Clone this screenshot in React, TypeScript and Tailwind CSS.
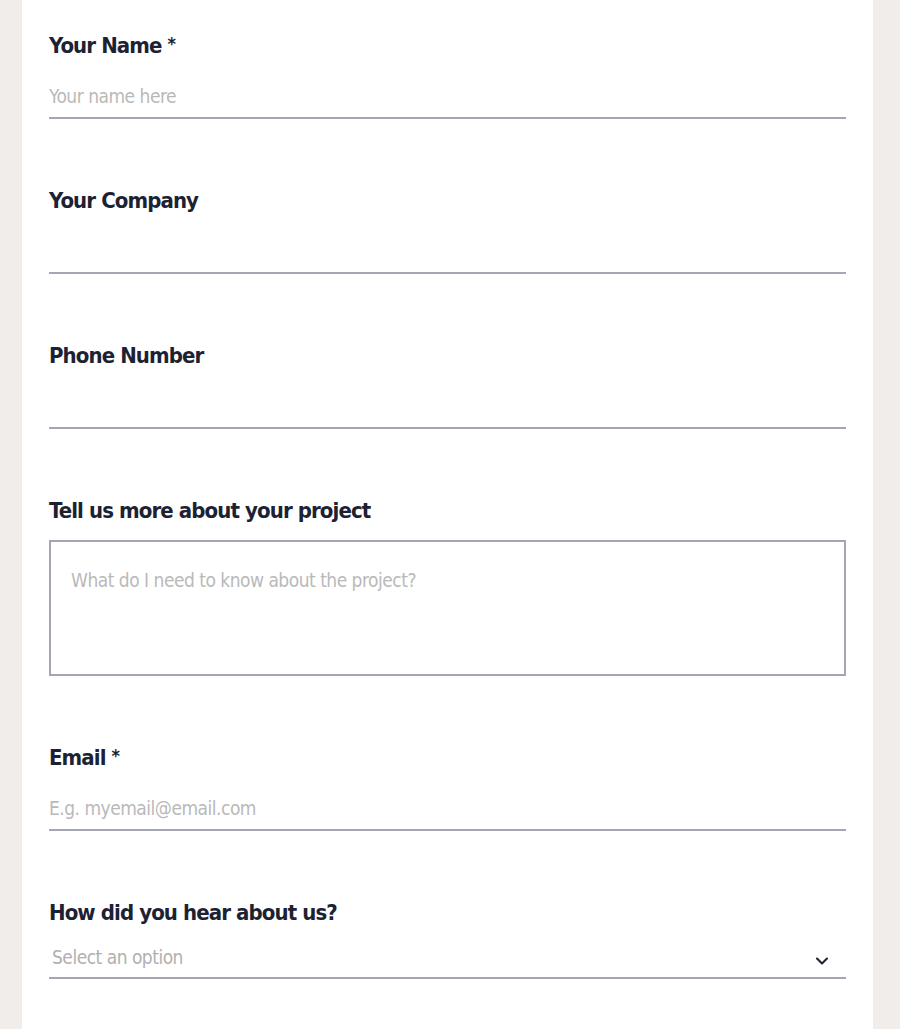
import { ChevronDown } from "lucide-react";

const labelFont = { fontFamily: '"Liberation Sans Narrow", "DejaVu Sans Condensed", "Liberation Sans", sans-serif' };

function Label({ text, required }: { text: string; required?: boolean }) {
  return (
    <label
      style={labelFont}
      className="block h-[32px] text-[22px] leading-[32px] font-bold tracking-[-0.9px] text-[#1d2233]"
    >
      {text}
      {required && <span className="ml-[6px] text-[18px] align-top leading-[28px]">*</span>}
    </label>
  );
}

function LineInput({ placeholder }: { placeholder?: string }) {
  return (
    <input
      type="text"
      placeholder={placeholder}
      style={labelFont}
      className="mt-[13px] block h-[44px] w-full border-b-2 border-[#a3a6b4] bg-transparent text-[19px] tracking-[-0.5px] text-[#1d2233] outline-none placeholder:text-[#b9b9b9]"
    />
  );
}

export default function App() {
  return (
    <div className="flex h-[1029px] w-full bg-[#f1edea]">
      <div className="ml-[22px] w-[851px] bg-white px-[27px] pt-[30px]">
        {/* Name */}
        <div>
          <Label text="Your Name" required />
          <LineInput placeholder="Your name here" />
        </div>

        {/* Company */}
        <div className="mt-[66px]">
          <Label text="Your Company" />
          <LineInput />
        </div>

        {/* Phone */}
        <div className="mt-[66px]">
          <Label text="Phone Number" />
          <LineInput />
        </div>

        {/* Project */}
        <div className="mt-[66px]">
          <Label text="Tell us more about your project" />
          <textarea
            placeholder="What do I need to know about the project?"
            style={labelFont}
            className="mt-[13px] block h-[136px] w-full resize-none border-2 border-[#a3a6b4] px-[20px] py-[24px] text-[19px] leading-[28px] tracking-[-0.5px] text-[#1d2233] outline-none placeholder:text-[#b9b9b9]"
          />
        </div>

        {/* Email */}
        <div className="mt-[66px]">
          <Label text="Email" required />
          <LineInput placeholder="E.g. myemail@email.com" />
        </div>

        {/* Source */}
        <div className="mt-[66px]">
          <Label text="How did you hear about us?" />
          <div
            style={labelFont}
            className="mt-[8px] flex h-[42px] w-full items-center justify-between border-b-2 border-[#a3a6b4] pl-[3px] pr-[14px]"
          >
            <span className="text-[19px] tracking-[-0.5px] text-[#b0b0b0]">Select an option</span>
            <ChevronDown className="mt-[8px] h-[20px] w-[20px] text-[#1d2233]" strokeWidth={2.5} />
          </div>
        </div>
      </div>
    </div>
  );
}
